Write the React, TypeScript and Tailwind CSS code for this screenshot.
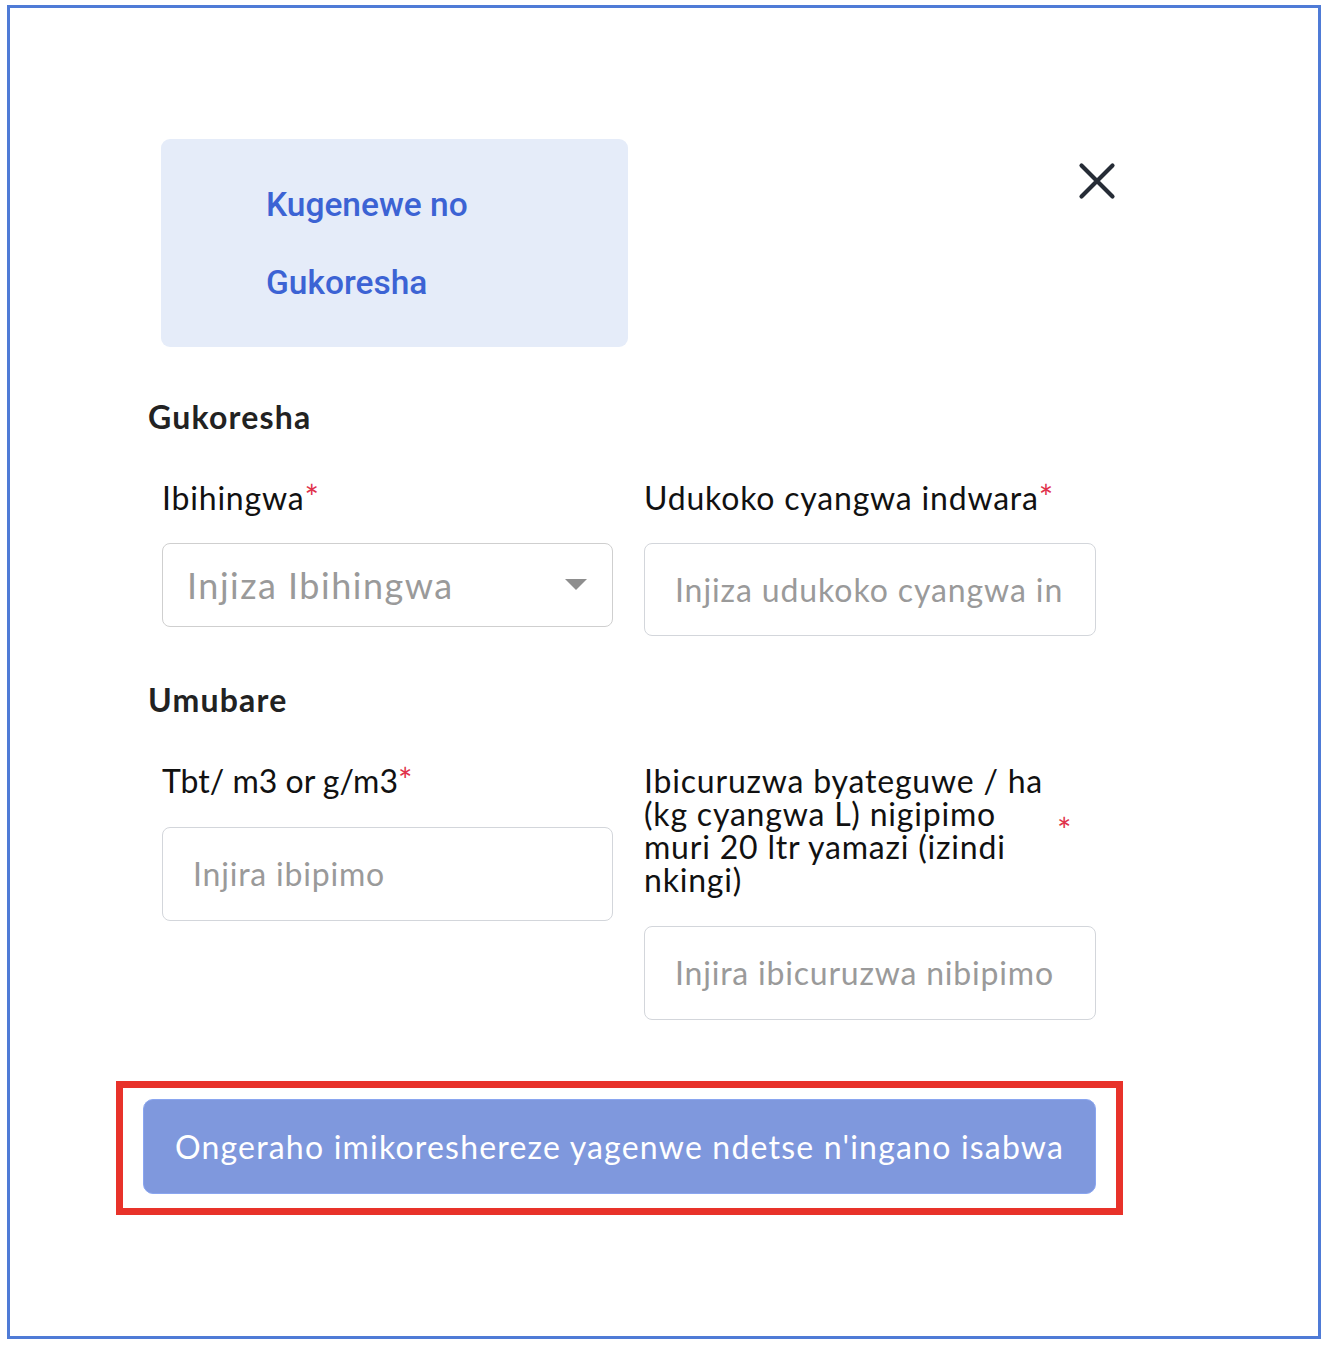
import React from "react";

const font = { fontFamily: "Lato, 'Noto Sans', sans-serif" };

export default function App() {
  return (
    <div className="w-[1336px] h-[1350px] bg-white pl-[7px] pt-[5px]" style={font}>
      <div className="w-[1314px] h-[1334px] border-[3px] border-[#4f7bd6] bg-white flex flex-col">
        {/* top row */}
        <div className="flex items-start mt-[131px] pl-[151px]">
          <div className="w-[467px] h-[208px] rounded-[9px] bg-[#e5ecf9] pl-[105px] pt-[47px] flex flex-col gap-[40px]" style={{ fontFamily: "Roboto, sans-serif" }}>
            <div className="text-[33.5px] leading-[38px] font-medium text-[#3c63d4]">Kugenewe no</div>
            <div className="text-[33.5px] leading-[38px] font-medium text-[#3c63d4]">Gukoresha</div>
          </div>
          <div className="ml-[449px] mt-[22px] w-[40px] h-[40px] flex items-center justify-center">
            <svg width="40" height="40" viewBox="0 0 40 40" fill="none">
              <path d="M4.5 4.5 L35.5 35.5 M35.5 4.5 L4.5 35.5" stroke="#262c36" strokeWidth="4.2" strokeLinecap="round" />
            </svg>
          </div>
        </div>

        <div className="pl-[138px] w-[1096px]">
          <div className="mt-[53px] text-[32px] leading-[34px] font-bold tracking-[1.2px] text-[#222]">Gukoresha</div>

          <div className="grid grid-cols-[451px_452px] gap-x-[31px] pl-[14px] mt-[46px]">
            <div className="flex flex-col">
              <div className="h-[34px] text-[32px] leading-[34px] tracking-[0.8px] text-[#111]">
                Ibihingwa<span className="text-[#e0314b] text-[34px] leading-none">*</span>
              </div>
              <div className="mt-[29px] h-[84px] border-[1.5px] border-[#cfcfcf] rounded-[8px] flex items-center justify-between pl-[24px] pr-[25px]">
                <span className="text-[36px] tracking-[1.5px] text-[#9a9a9a]">Injiza Ibihingwa</span>
                <svg width="22" height="12" viewBox="0 0 22 12">
                  <path d="M0 0 L22 0 L11 11 Z" fill="#8e8e8e" />
                </svg>
              </div>
            </div>
            <div className="flex flex-col">
              <div className="h-[34px] text-[32px] leading-[34px] tracking-[0.8px] text-[#111] whitespace-nowrap">
                Udukoko cyangwa indwara<span className="text-[#e0314b] text-[34px] leading-none">*</span>
              </div>
              <div className="mt-[29px] h-[93px] border-[1.5px] border-[#d3d6db] rounded-[8px] flex items-center pl-[30px] overflow-hidden whitespace-nowrap">
                <span className="text-[32px] tracking-[0.9px] text-[#9a9a9a]">Injiza udukoko cyangwa in</span>
              </div>
            </div>
          </div>

          <div className="mt-[47px] text-[32px] leading-[34px] font-bold tracking-[1.2px] text-[#222]">Umubare</div>

          <div className="grid grid-cols-[451px_452px] gap-x-[31px] pl-[14px] mt-[47px]">
            <div className="flex flex-col">
              <div className="h-[34px] mt-[-1px] text-[32px] leading-[34px] text-[#111]">
                Tbt/ m3 or g/m3<span className="text-[#e0314b] text-[34px] leading-none">*</span>
              </div>
              <div className="mt-[30px] h-[94px] border-[1.5px] border-[#d3d6db] rounded-[8px] flex items-center pl-[30px]">
                <span className="text-[32px] tracking-[0.8px] text-[#9a9a9a]">Injira ibipimo</span>
              </div>
            </div>
            <div className="flex flex-col">
              <div className="flex items-center">
                <div className="w-[404px] text-[32px] leading-[33px] tracking-[0.8px] text-[#111]">
                  Ibicuruzwa byateguwe / ha (kg cyangwa L) nigipimo muri 20 ltr yamazi (izindi nkingi)
                </div>
                <span className="ml-[9px] text-[34px] leading-[34px] text-[#e0314b]">*</span>
              </div>
              <div className="mt-[30px] h-[94px] border-[1.5px] border-[#d3d6db] rounded-[8px] flex items-center pl-[30px]">
                <span className="text-[32px] tracking-[0.8px] text-[#9a9a9a]">Injira ibicuruzwa nibipimo</span>
              </div>
            </div>
          </div>
        </div>

        <div className="ml-[106px] mt-[61px] w-[1007px] h-[134px] border-[7px] border-[#e8322a] pl-[20px] pt-[11px]">
          <div className="w-[953px] h-[95px] rounded-[10px] bg-[#7f98dd] border border-[#8aa6f0] flex items-center justify-center">
            <span className="text-[32px] tracking-[1.2px] text-white whitespace-nowrap">Ongeraho imikoreshereze yagenwe ndetse n'ingano isabwa</span>
          </div>
        </div>
      </div>
    </div>
  );
}
